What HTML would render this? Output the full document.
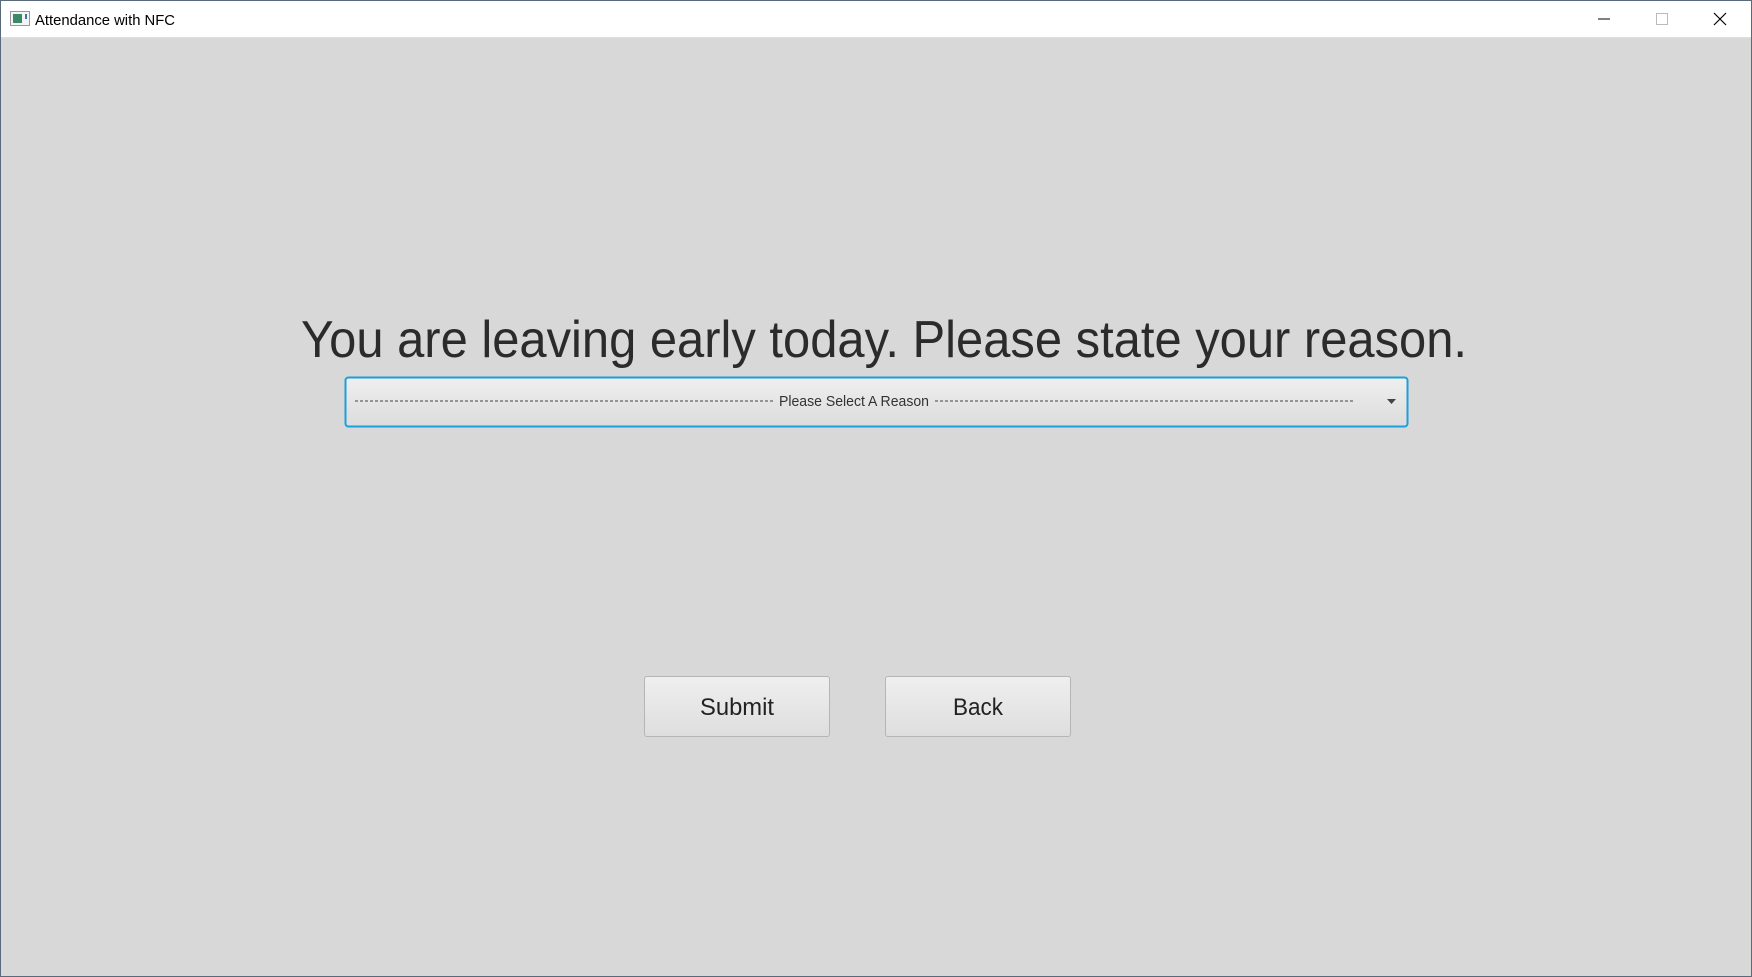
<!DOCTYPE html>
<html><head><style>
body{margin:0;width:1752px;height:977px;overflow:hidden;background:#d8d8d8;font-family:"Liberation Sans",sans-serif;position:relative}
.tb{position:absolute;left:0;top:0;width:1752px;height:37px;background:#fff;border-bottom:1px solid #e0e0e0}
.win{position:absolute;left:0;top:0;width:1750px;height:975px;border:1px solid #5a6a7a;pointer-events:none}
.btn{position:absolute;top:676px;width:186px;height:61px;border:1px solid #b5b5b5;border-radius:3px;background:linear-gradient(#efefef,#dedede);box-sizing:border-box}
</style></head><body>
<div class="tb">
<svg style="position:absolute;left:10px;top:11px" width="20" height="15"><rect x="0.5" y="0.5" width="19" height="14" fill="#f4f4f4" stroke="#999"/><rect x="3" y="3" width="9" height="9" fill="#3a8a6a"/><rect x="15" y="3" width="2" height="5" fill="#3a7aa0"/></svg>
<svg width="1752" height="37" style="position:absolute;left:0;top:0"><text x="35" y="25" font-family="Liberation Sans" font-size="15" fill="#000" textLength="140" lengthAdjust="spacingAndGlyphs">Attendance with NFC</text>
<line x1="1598" y1="19" x2="1610" y2="19" stroke="#000" stroke-width="1"/>
<rect x="1656.5" y="13.5" width="11" height="11" fill="none" stroke="#bbb"/>
<path d="M1714 13L1726 25M1726 13L1714 25" stroke="#000" stroke-width="1.2"/></svg>
</div>
<svg width="1752" height="977" style="position:absolute;left:0;top:0">
<text x="301" y="357" font-family="Liberation Sans" font-size="52" fill="#2b2b2b" textLength="1166" lengthAdjust="spacingAndGlyphs">You are leaving early today. Please state your reason.</text>
<defs><linearGradient id="g" x1="0" y1="0" x2="0" y2="1"><stop offset="0" stop-color="#efefef"/><stop offset="1" stop-color="#dcdcdc"/></linearGradient></defs>
<rect x="345.5" y="377.5" width="1062" height="49" rx="3" fill="url(#g)" stroke="#1aa0dc" stroke-width="2"/>
<line x1="355" y1="401" x2="774" y2="401" stroke="#444" stroke-dasharray="3,2" stroke-width="1"/>
<line x1="935" y1="401" x2="1354" y2="401" stroke="#444" stroke-dasharray="3,2" stroke-width="1"/>
<text x="854" y="406" text-anchor="middle" font-family="Liberation Sans" font-size="15" fill="#333" textLength="150" lengthAdjust="spacingAndGlyphs">Please Select A Reason</text>
<path d="M1387 399h9l-4.5 5z" fill="#444"/>
</svg>
<div class="btn" style="left:644px"></div>
<div class="btn" style="left:885px"></div>
<svg width="1752" height="977" style="position:absolute;left:0;top:0">
<text x="737" y="715" text-anchor="middle" font-family="Liberation Sans" font-size="24" fill="#222" textLength="74" lengthAdjust="spacingAndGlyphs">Submit</text>
<text x="978" y="715" text-anchor="middle" font-family="Liberation Sans" font-size="24" fill="#222" textLength="50" lengthAdjust="spacingAndGlyphs">Back</text>
</svg>
<div class="win"></div>
</body></html>
